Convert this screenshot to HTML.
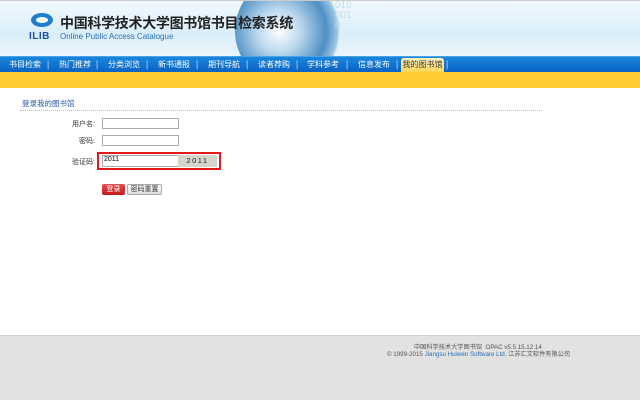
<!DOCTYPE html>
<html><head><meta charset="utf-8"><style>
*{margin:0;padding:0;box-sizing:border-box}
body{width:640px;height:400px;overflow:hidden;background:#fff;font-family:"Liberation Sans","Noto Sans CJK SC",sans-serif;position:relative}
.hdr{position:absolute;left:0;top:0;width:640px;height:56px;background:linear-gradient(#f3f9fd,#d9eef9 60%,#eaf6fb);border-top:1px solid #ccc;overflow:hidden}
.globe{position:absolute;left:235px;top:-25px;width:110px;height:110px;border-radius:50%;background:radial-gradient(circle at 40% 50%,#fff 0%,#bcd9ee 25%,#4e8fc4 55%,#9fc6e3 68%,rgba(230,244,251,0) 71%)}
.bin{position:absolute;left:335px;top:0px;color:#c7dbe8;font-size:10px;line-height:10px;width:20px;word-break:break-all}
.t{position:absolute;left:60px;top:13px;font-size:14px;color:#222;font-weight:bold;font-family:"Noto Sans CJK SC",sans-serif;letter-spacing:-.3px}
.en{position:absolute;left:60px;top:32px;font-size:8px;color:#2a6fb6}
.ilib{position:absolute;left:29px;top:31px;font-size:10px;color:#1a4fa3;font-weight:bold;letter-spacing:.5px}
.blob{position:absolute;left:31px;top:13px;width:22px;height:14px;border-radius:50%;background:#1e7fce;border:3px solid #1e7fce}
.blob:after{content:"";position:absolute;left:2px;top:1px;width:12px;height:6px;border-radius:50%;background:#fff}
.nav{position:absolute;left:0;top:56px;width:640px;height:16px;background:linear-gradient(#1a86dc,#0a63c5);border-top:1px solid #4aa3e6}
.nav span{position:absolute;top:2px;font-size:8px;color:#fff;white-space:nowrap;font-family:"Noto Sans CJK SC",sans-serif}
.tab{position:absolute;left:401px;top:58px;width:43px;height:14px;background:linear-gradient(#fff4c8,#ffd453);border-radius:3px 3px 0 0;font-size:8px;color:#333;text-align:center;padding-top:1px}
.yb{position:absolute;left:0;top:72px;width:640px;height:16px;background:#ffcc33}
.h2{position:absolute;left:22px;top:98px;font-size:7.5px;color:#2255aa}
.dl{position:absolute;left:20px;top:110px;width:522px;border-top:1px dotted #bbb}
.lb{position:absolute;font-size:7px;color:#333;text-align:right;width:60px;left:35px}
.in{position:absolute;left:102px;width:77px;height:11px;border:1px solid #aaa;background:#fff;font-size:7px;padding-left:1px}
.red{position:absolute;left:97px;top:152px;width:124px;height:18px;border:2px solid #e21a1a}
.cap{position:absolute;left:178px;top:155px;width:39px;height:12px;background:#d5d5cc;font-size:7.5px;letter-spacing:1.5px;text-align:center;line-height:12px;color:#222}
.b1{position:absolute;left:102px;top:184px;width:23px;height:11px;background:linear-gradient(#e85050,#c01818);border-radius:2px;color:#fff;font-size:7px;text-align:center;line-height:11px}
.b2{position:absolute;left:127px;top:184px;width:35px;height:11px;background:linear-gradient(#fff,#ddd);border:1px solid #aaa;border-radius:2px;font-size:7px;text-align:center;line-height:9px;color:#333}
.ft{position:absolute;left:0;top:335px;width:640px;height:65px;background:#e2e2e2;border-top:1px solid #d0d0d0}
.f{position:absolute;font-size:6.2px;color:#555;white-space:nowrap}
</style></head><body>
<div class="hdr"><div class="globe"></div><div class="bin">0100010</div></div>
<div class="blob"></div>
<div class="ilib">ILIB</div>
<div class="t">中国科学技术大学图书馆书目检索系统</div>
<div class="en">Online Public Access Catalogue</div>
<div class="nav">
<span style="left:9px">书目检索</span><span style="left:47px">|</span>
<span style="left:59px">热门推荐</span><span style="left:96px">|</span>
<span style="left:108px">分类浏览</span><span style="left:146px">|</span>
<span style="left:158px">新书通报</span><span style="left:196px">|</span>
<span style="left:208px">期刊导航</span><span style="left:246px">|</span>
<span style="left:258px">读者荐购</span><span style="left:296px">|</span>
<span style="left:307px">学科参考</span><span style="left:346px">|</span>
<span style="left:358px">信息发布</span><span style="left:396px">|</span>
<span style="left:446px">|</span>
</div>
<div class="tab">我的图书馆</div>
<div class="yb"></div>
<div class="h2">登录我的图书馆</div>
<div class="dl"></div>
<div class="lb" style="top:119px">用户名:</div><div class="in" style="top:118px"></div>
<div class="lb" style="top:136px">密码:</div><div class="in" style="top:135px"></div>
<div class="lb" style="top:157px">验证码:</div>
<div class="red"></div>
<div class="in" style="top:155px;height:12px">2011</div>
<div class="cap">2011</div>
<div class="b1">登录</div><div class="b2">密码重置</div>
<div class="ft"></div>
<div class="f" style="left:414px;top:342px">中国科学技术大学图书馆 &nbsp;OPAC v5.5.15.12.14</div>
<div class="f" style="left:387px;top:349px">© 1999-2015 <span style="color:#2a6fb6">Jiangsu Huiwen Software Ltd.</span> 江苏汇文软件有限公司</div>
</body></html>
